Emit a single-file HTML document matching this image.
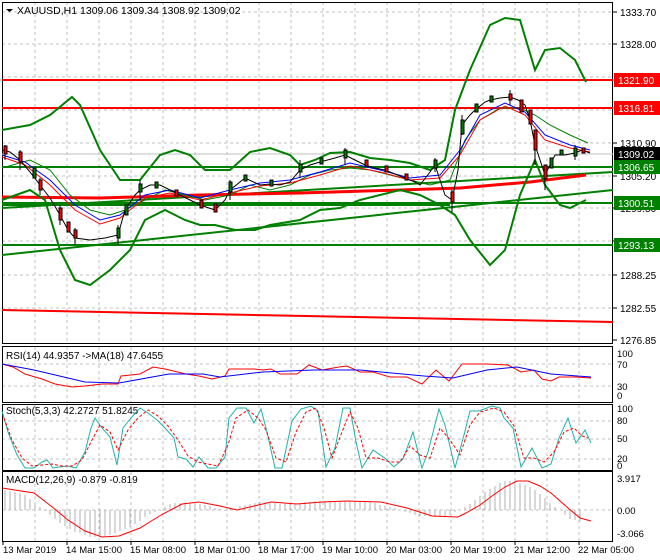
<!DOCTYPE html>
<html><head><meta charset="utf-8"><style>
html,body{margin:0;padding:0;background:#fff;width:660px;height:560px;overflow:hidden}
svg{display:block;font-family:"Liberation Sans",sans-serif}
</style></head><body>
<svg width="660" height="560" viewBox="0 0 660 560" xmlns="http://www.w3.org/2000/svg">
<rect width="660" height="560" fill="#fff"/>
<g stroke="#c0c0c0" stroke-dasharray="3,3" stroke-width="1">
<path d="M35 2V344M67 2V344M99 2V344M131 2V344M163 2V344M195 2V344M227 2V344M259 2V344M291 2V344M323 2V344M355 2V344M387 2V344M419 2V344M451 2V344M483 2V344M515 2V344M547 2V344M579 2V344"/>
<path d="M35 347V403M67 347V403M99 347V403M131 347V403M163 347V403M195 347V403M227 347V403M259 347V403M291 347V403M323 347V403M355 347V403M387 347V403M419 347V403M451 347V403M483 347V403M515 347V403M547 347V403M579 347V403"/>
<path d="M35 405V471M67 405V471M99 405V471M131 405V471M163 405V471M195 405V471M227 405V471M259 405V471M291 405V471M323 405V471M355 405V471M387 405V471M419 405V471M451 405V471M483 405V471M515 405V471M547 405V471M579 405V471"/>
<path d="M35 472V541M67 472V541M99 472V541M131 472V541M163 472V541M195 472V541M227 472V541M259 472V541M291 472V541M323 472V541M355 472V541M387 472V541M419 472V541M451 472V541M483 472V541M515 472V541M547 472V541M579 472V541"/>
<path d="M2 12H613M2 44H613M2 77H613M2 110H613M2 143H613M2 176H613M2 208H613M2 241H613M2 275H613M2 308H613"/>
<path d="M2 364H613M2 386H613M2 421H613M2 439H613M2 459H613M2 510H613"/>
</g>
<g fill="none" stroke="#000" stroke-width="1">
<rect x="2.5" y="2.5" width="610" height="341"/>
<rect x="2.5" y="346.5" width="610" height="56"/>
<rect x="2.5" y="404.5" width="610" height="66"/>
<rect x="2.5" y="471.5" width="610" height="70"/>
</g>
<path d="M2 154H613" stroke="#c0c0c0" stroke-width="1"/>
<path d="M2 80H613M2 108H613" stroke="#ff0000" stroke-width="2"/>
<path d="M2 167H613M2 203H613M2 245H613" stroke="#008000" stroke-width="2"/>
<path d="M2 310L613 322" stroke="#ff0000" stroke-width="2"/>
<path d="M2 255L613 190M2 208L613 172M2 205L450 205" stroke="#008000" stroke-width="2"/>
<path d="M2 197L100 198L200 195L300 193L400 190L460 188L530 182L586 175" stroke="#ff0000" stroke-width="3" fill="none"/>
<g fill="none" stroke="#008000" stroke-width="2">
<polyline points="2,130 30,125 50,115 72,97 80,105 100,150 120,180 140,180 160,155 175,150 190,155 205,170 230,170 250,152 270,148 290,155 300,165 315,160 330,153 350,152 370,158 390,160 410,163 430,170 445,160 455,110 470,70 490,25 505,18 520,20 535,70 545,50 560,48 575,60 586,82"/>
<polyline points="2,200 30,190 45,200 60,250 75,280 90,285 110,270 130,250 145,220 165,210 185,220 200,225 215,225 235,230 255,230 270,225 300,220 320,210 340,208 360,200 380,195 400,190 420,195 440,205 455,215 470,240 490,265 505,250 520,195 535,160 545,185 560,205 570,208 586,200"/>
<polyline stroke-width="1" points="2,168 30,160 50,170 70,195 90,210 110,215 125,210 145,200 165,190 185,195 205,200 230,195 250,185 270,190 290,185 310,175 330,170 350,168 370,170 390,175 410,180 430,185 450,180 465,140 480,120 500,108 520,108 535,115 550,125 570,135 588,143"/>
</g>
<polyline fill="none" stroke="#0000ff" stroke-width="1" points="2,155 25,162 50,180 75,205 100,220 120,215 145,195 170,190 200,198 230,190 260,183 290,180 320,172 350,163 380,170 410,178 440,175 460,150 480,115 505,103 525,112 545,135 570,145 590,150"/>
<polyline fill="none" stroke="#ff0000" stroke-width="1" points="2,157 25,165 50,185 75,210 100,224 120,218 145,198 170,193 200,200 230,193 260,186 290,183 320,175 350,166 380,172 410,180 440,178 460,155 480,120 505,106 525,115 545,140 570,148 590,152"/>
<polyline fill="none" stroke="#000" stroke-width="1" points="2,150 10,152 20,160 30,172 40,185 50,198 60,215 68,230 75,238 90,240 105,238 118,235 125,210 135,195 140,190 150,185 160,185 170,190 180,195 190,200 200,205 215,210 225,200 230,190 245,178 260,185 270,184 280,185 290,182 300,170 310,165 320,162 335,158 345,155 355,160 365,165 375,168 385,170 395,174 405,178 415,182 420,185 430,172 435,165 440,180 445,195 452,200 458,170 462,125 470,115 475,110 485,102 490,100 500,98 510,97 518,100 525,105 530,120 535,145 540,160 545,175 550,165 555,155 565,155 575,153 582,150 590,153"/>
<g stroke="#000" stroke-width="1">
<path d="M5 145V160M20 150V170M40 178V195M60 205V225M75 228V245M118 225V245M140 180V200M230 180V200M300 160V178M345 148V165M435 158V172M452 190V212M462 115V135M510 90V105M535 135V165M545 165V190M575 145V160"/>
</g>
<g stroke="#000" stroke-width="1">
<rect x="4" y="146" width="3" height="8" fill="#ff0000"/><rect x="19" y="152" width="3" height="10" fill="#ff0000"/>
<rect x="33" y="168" width="3" height="10" fill="#008000"/><rect x="39" y="180" width="3" height="10" fill="#ff0000"/>
<rect x="59" y="208" width="3" height="12" fill="#ff0000"/><rect x="67" y="222" width="3" height="10" fill="#ff0000"/>
<rect x="74" y="230" width="3" height="8" fill="#ff0000"/><rect x="117" y="228" width="3" height="10" fill="#008000"/>
<rect x="125" y="205" width="3" height="10" fill="#008000"/><rect x="139" y="184" width="3" height="8" fill="#008000"/>
<rect x="155" y="182" width="3" height="6" fill="#008000"/><rect x="175" y="190" width="3" height="6" fill="#ff0000"/>
<rect x="200" y="200" width="3" height="8" fill="#ff0000"/><rect x="214" y="204" width="3" height="8" fill="#ff0000"/>
<rect x="229" y="182" width="3" height="10" fill="#008000"/><rect x="244" y="175" width="3" height="6" fill="#008000"/>
<rect x="270" y="180" width="3" height="6" fill="#008000"/><rect x="299" y="164" width="3" height="8" fill="#008000"/>
<rect x="320" y="158" width="3" height="6" fill="#008000"/><rect x="344" y="150" width="3" height="8" fill="#008000"/>
<rect x="365" y="160" width="3" height="6" fill="#ff0000"/><rect x="385" y="166" width="3" height="6" fill="#ff0000"/>
<rect x="405" y="174" width="3" height="6" fill="#ff0000"/><rect x="434" y="160" width="3" height="8" fill="#008000"/>
<rect x="451" y="192" width="3" height="10" fill="#ff0000"/><rect x="461" y="120" width="3" height="14" fill="#008000"/>
<rect x="475" y="104" width="3" height="8" fill="#008000"/><rect x="490" y="96" width="3" height="6" fill="#008000"/>
<rect x="509" y="94" width="3" height="6" fill="#ff0000"/><rect x="520" y="100" width="3" height="12" fill="#ff0000"/>
<rect x="529" y="110" width="3" height="14" fill="#ff0000"/><rect x="534" y="130" width="3" height="20" fill="#ff0000"/>
<rect x="544" y="165" width="3" height="14" fill="#ff0000"/><rect x="550" y="158" width="3" height="10" fill="#008000"/>
<rect x="560" y="150" width="3" height="5" fill="#008000"/><rect x="574" y="148" width="3" height="8" fill="#008000"/>
<rect x="582" y="148" width="3" height="5" fill="#ff0000"/>
</g>
<path d="M6 9h7l-3.5 3z" fill="#000"/>
<text x="17" y="14" font-size="10.5" fill="#000">XAUUSD,H1  1309.06 1309.34 1308.92 1309.02</text>
<g font-size="10" fill="#000">
<path d="M613 12h4M613 44h4M613 143h4M613 176h4M613 208h4M613 241h4M613 275h4M613 308h4M613 340h4" stroke="#000"/>
<text x="620" y="16">1333.70</text>
<text x="620" y="48">1328.00</text>
<text x="620" y="147">1310.90</text>
<text x="620" y="180">1305.20</text>
<text x="620" y="212">1299.50</text>
<text x="620" y="245">1293.80</text>
<text x="620" y="279">1288.25</text>
<text x="620" y="312">1282.55</text>
<text x="620" y="344">1276.85</text>
</g>
<g font-size="10">
<rect x="614" y="73" width="46" height="14" fill="#ff0000"/><text x="618" y="84" fill="#fff">1321.90</text>
<rect x="614" y="101" width="46" height="14" fill="#ff0000"/><text x="618" y="112" fill="#fff">1316.81</text>
<rect x="614" y="147" width="46" height="14" fill="#000"/><text x="618" y="158" fill="#fff">1309.02</text>
<rect x="614" y="160" width="46" height="14" fill="#008000"/><text x="618" y="171" fill="#fff">1306.65</text>
<rect x="614" y="196" width="46" height="14" fill="#008000"/><text x="618" y="207" fill="#fff">1300.51</text>
<rect x="614" y="238" width="46" height="14" fill="#008000"/><text x="618" y="249" fill="#fff">1293.13</text>
</g>
<text x="6" y="359" font-size="10">RSI(14) 44.9357  -&gt;MA(18) 47.6455</text>
<polyline fill="none" stroke="#ff0000" points="2,364 13,367 25,374 42,379 55,384 72,387 85,386 102,384 118,384 121,376 140,374 153,367 165,369 186,374 199,376 212,379 225,376 229,369 254,369 263,370 271,369 280,374 297,374 309,365 322,370 339,367 347,366 360,372 373,372 390,377 407,377 422,384 436,370 449,381 462,364 487,364 508,365 521,372 534,370 542,379 551,381 559,377 576,377 591,378"/>
<polyline fill="none" stroke="#0000ff" points="2,364 34,370 85,382 119,383 169,374 203,374 220,377 263,372 314,370 360,370 381,372 424,376 453,378 487,370 517,367 551,374 591,377"/>
<g font-size="9.5"><text x="617" y="357">100</text><text x="617" y="368">70</text><text x="617" y="390">30</text><text x="617" y="399">0</text></g>
<text x="6" y="414" font-size="10">Stoch(5,3,3) 42.2727 51.8245</text>
<polyline fill="none" stroke="#20b2aa" points="2,411 8,432 17,455 25,468 34,468 42,462 47,460 53,468 59,467 68,466 76,468 85,452 91,428 95,418 102,428 110,437 117,465 123,428 131,418 140,408 148,413 157,420 165,428 174,438 178,457 186,459 193,467 199,457 208,468 216,468 225,457 229,418 237,408 246,408 254,423 261,409 267,432 275,468 282,468 292,421 301,409 311,406 318,411 326,467 335,448 343,408 350,408 356,442 362,468 373,450 386,459 394,467 403,459 413,432 422,468 428,452 439,409 445,425 455,468 464,435 470,411 479,411 492,406 500,408 504,418 513,428 521,467 532,448 542,468 551,464 559,438 568,418 576,443 585,430 591,443"/>
<polyline fill="none" stroke="#ff0000" stroke-dasharray="3,2" points="4,418 12,440 22,458 32,466 42,465 52,464 62,466 72,466 82,460 92,440 100,425 110,432 118,450 128,430 138,418 148,410 158,416 168,426 178,440 188,456 198,462 208,464 218,466 228,445 236,418 248,410 258,418 266,430 276,458 286,462 296,432 306,412 316,408 324,428 332,458 342,432 350,412 358,428 366,458 378,458 390,462 400,462 410,446 420,455 430,458 440,428 450,440 460,455 470,425 480,412 494,408 504,412 514,426 524,458 534,458 544,462 554,452 564,432 574,428 582,436 588,438"/>
<g font-size="9.5"><text x="617" y="412">100</text><text x="617" y="424">80</text><text x="617" y="442">50</text><text x="617" y="462">20</text><text x="617" y="469">0</text></g>
<text x="6" y="483" font-size="10">MACD(12,26,9) -0.879 -0.819</text>
<path stroke="#b0b0b0" stroke-width="1" fill="none" d="M5 510V490M10 510V491M15 510V492M20 510V493M25 510V495M30 510V499M35 510V503M40 510V507M45 510V511M50 510V515M55 510V519M60 510V523M65 510V526M70 510V529M75 510V532M80 510V533M85 510V535M90 510V537M95 510V537M100 510V536M105 510V536M110 510V535M115 510V533M120 510V531M125 510V529M130 510V527M135 510V524M140 510V521M145 510V517M150 510V514M155 510V512M165 510V507M170 510V504M175 510V503M180 510V503M185 510V502M190 510V503M195 510V504M200 510V504M205 510V505M210 510V506M215 510V508M220 510V509M230 510V509M235 510V508M240 510V506M245 510V505M250 510V504M255 510V503M260 510V502M265 510V502M270 510V503M275 510V503M280 510V504M285 510V504M290 510V504M295 510V504M300 510V503M305 510V502M310 510V502M315 510V501M320 510V501M325 510V501M330 510V501M335 510V501M340 510V501M345 510V501M350 510V501M355 510V501M360 510V502M365 510V502M370 510V502M375 510V503M380 510V505M385 510V506M390 510V507M395 510V508M405 510V512M410 510V513M415 510V515M420 510V516M425 510V516M430 510V516M435 510V517M440 510V517M445 510V516M450 510V515M455 510V512M465 510V507M470 510V504M475 510V500M480 510V496M485 510V492M490 510V489M495 510V486M500 510V483M505 510V481M510 510V481M515 510V481M520 510V483M525 510V485M530 510V487M535 510V490M540 510V494M545 510V498M550 510V503M555 510V507M565 510V515M570 510V519M575 510V520M580 510V521"/>
<polyline fill="none" stroke="#ff0000" stroke-width="1" points="2,488 34,493 51,506 68,520 85,531 102,537 119,536 140,528 161,515 182,504 199,502 220,506 237,510 254,506 271,502 297,504 322,502 347,501 381,502 407,508 432,516 458,517 466,513 480,505 492,496 505,487 517,481 528,481 540,486 551,493 568,508 580,518 591,521"/>
<g font-size="9.5"><text x="617" y="482">3.917</text><text x="617" y="514">0.00</text><text x="617" y="537">-3.066</text></g>
<path d="M3 541v4M67 541v4M131 541v4M195 541v4M259 541v4M323 541v4M387 541v4M451 541v4M515 541v4M579 541v4" stroke="#000"/>
<g font-size="9.5" fill="#000">
<text x="3" y="553">13 Mar 2019</text>
<text x="66" y="553">14 Mar 15:00</text>
<text x="130" y="553">15 Mar 08:00</text>
<text x="194" y="553">18 Mar 01:00</text>
<text x="258" y="553">18 Mar 17:00</text>
<text x="322" y="553">19 Mar 10:00</text>
<text x="386" y="553">20 Mar 03:00</text>
<text x="450" y="553">20 Mar 19:00</text>
<text x="514" y="553">21 Mar 12:00</text>
<text x="578" y="553">22 Mar 05:00</text>
</g>
</svg>
</body></html>
